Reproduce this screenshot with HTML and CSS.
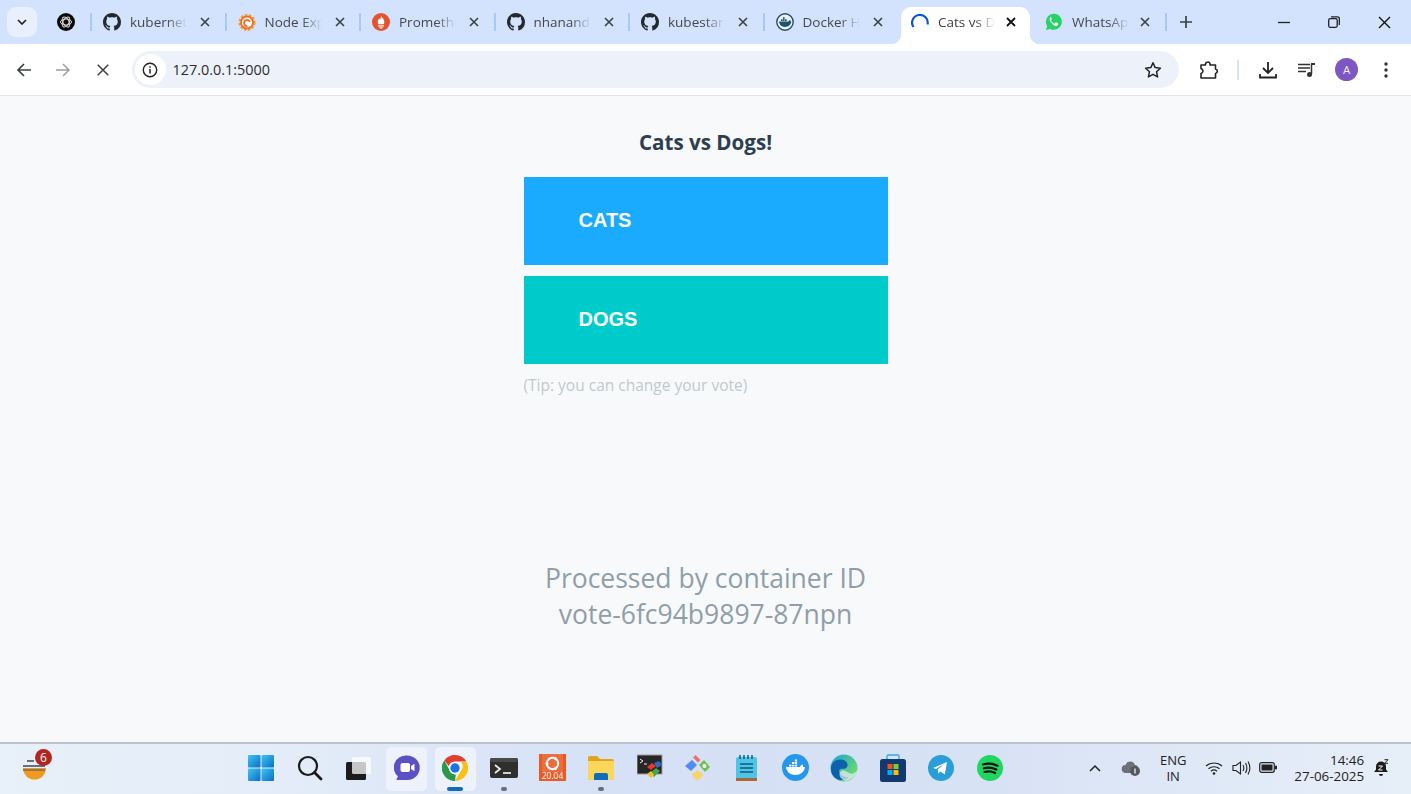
FILE: index.html
```html
<!DOCTYPE html>
<html lang="en">
<head>
<meta charset="utf-8">
<title>Cats vs Dogs!</title>
<link rel="stylesheet" href="styles.css">
</head>
<body>
<svg class="defs" width="0" height="0" aria-hidden="true">
  <symbol id="gh" viewBox="0 0 16 16"><path fill="#24292f" d="M8 0C3.58 0 0 3.58 0 8c0 3.54 2.29 6.53 5.47 7.59.4.07.55-.17.55-.38 0-.19-.01-.82-.01-1.49-2.01.37-2.53-.49-2.69-.94-.09-.23-.48-.94-.82-1.13-.28-.15-.68-.52-.01-.53.63-.01 1.08.58 1.23.82.72 1.21 1.87.87 2.33.66.07-.52.28-.87.51-1.07-1.78-.2-3.64-.89-3.64-3.95 0-.87.31-1.59.82-2.15-.08-.2-.36-1.02.08-2.12 0 0 .67-.21 2.2.82.64-.18 1.32-.27 2-.27.68 0 1.36.09 2 .27 1.53-1.04 2.2-.82 2.2-.82.44 1.1.16 1.92.08 2.12.51.56.82 1.27.82 2.15 0 3.07-1.87 3.75-3.65 3.95.29.25.54.73.54 1.48 0 1.07-.01 1.93-.01 2.2 0 .21.15.46.55.38A8.013 8.013 0 0016 8c0-4.42-3.58-8-8-8z"/></symbol>
  <symbol id="x" viewBox="0 0 10 10"><path d="M1 1l8 8M9 1l-8 8" stroke="#3c4043" stroke-width="1.6" fill="none"/></symbol>
</svg>

<header class="tabstrip">
  <div class="tab-search"><svg width="10" height="6" viewBox="0 0 10 6"><path d="M1 1l4 4 4-4" stroke="#1f1f1f" stroke-width="1.6" fill="none"/></svg></div>
  <div class="pinned"><svg width="18" height="18" viewBox="0 0 18 18"><circle cx="9" cy="9" r="9" fill="#0b0b0b"/><g fill="none" stroke="#ddd" stroke-width="1"><ellipse cx="9" cy="9" rx="5.5" ry="3"/><ellipse cx="9" cy="9" rx="5.5" ry="3" transform="rotate(60 9 9)"/><ellipse cx="9" cy="9" rx="5.5" ry="3" transform="rotate(120 9 9)"/></g></svg></div>
  <i class="sep"></i>
  <div class="tab"><svg class="fav" viewBox="0 0 16 16"><use href="#gh"/></svg><span class="title">kubernetes</span><svg class="close" viewBox="0 0 10 10"><use href="#x"/></svg></div>
  <i class="sep"></i>
  <div class="tab"><svg class="fav" viewBox="0 0 18 18"><circle cx="9" cy="9.500" r="7.300" fill="none" stroke="#f79a2b" stroke-width="2.400" stroke-dasharray="2.400 1.600"/><circle cx="9" cy="9.500" r="6" fill="#fff" stroke="#f0702a" stroke-width="1.800"/><path d="M11.800 8.800A3 3 0 1 0 9.500 13" fill="none" stroke="#f0702a" stroke-width="1.800"/></svg><span class="title">Node Exporter</span><svg class="close" viewBox="0 0 10 10"><use href="#x"/></svg></div>
  <i class="sep"></i>
  <div class="tab"><svg class="fav" viewBox="0 0 18 18"><circle cx="9" cy="9" r="9" fill="#e6522c"/><path fill="#fff" d="M9 2.500c.5 2 3.300 3.300 3.300 6.500 0 .9-.3 1.700-.8 2.300h-5c-.5-.6-.8-1.400-.8-2.300 0-1.700 1-2.400 1.300-3.700.6.500.8 1 .9 1.500C8.500 5.800 9.200 4 9 2.500zM6 12.200h6v1.300H6zM7 14.300h4c-.2.900-1 1.300-2 1.300s-1.800-.4-2-1.300z"/></svg><span class="title">Prometheus</span><svg class="close" viewBox="0 0 10 10"><use href="#x"/></svg></div>
  <i class="sep"></i>
  <div class="tab"><svg class="fav" viewBox="0 0 16 16"><use href="#gh"/></svg><span class="title">nhanand/</span><svg class="close" viewBox="0 0 10 10"><use href="#x"/></svg></div>
  <i class="sep"></i>
  <div class="tab"><svg class="fav" viewBox="0 0 16 16"><use href="#gh"/></svg><span class="title">kubestarter</span><svg class="close" viewBox="0 0 10 10"><use href="#x"/></svg></div>
  <i class="sep"></i>
  <div class="tab"><svg class="fav" viewBox="0 0 18 18"><circle cx="9" cy="9" r="8.200" fill="#e9f0f6" stroke="#22506f" stroke-width="1.400"/><path fill="#22506f" d="M3 8.600h9.500c.5-1 1.200-1.500 1.700-1.500.4.500.4 1 .2 1.500h1c-.6 3.600-3.300 5.400-6.400 5.400-3.300 0-5.600-2-6-5.400zM5 6.200h1.600v1.700H5zM7 6.200h1.600v1.700H7zM9 6.200h1.600v1.700H9zM7 4.200h1.600v1.700H7z"/></svg><span class="title">Docker Hub</span><svg class="close" viewBox="0 0 10 10"><use href="#x"/></svg></div>
  <i class="sep sep-hidden"></i>
  <div class="tab tab-active"><svg class="fav" viewBox="0 0 18 18"><path d="M2.400 14A7.800 7.800 0 1 1 16.500 11.500" fill="none" stroke="#0b57d0" stroke-width="2.200"/></svg><span class="title">Cats vs Dogs!</span><svg class="close" viewBox="0 0 10 10"><path d="M1 1l8 8M9 1l-8 8" stroke="#111" stroke-width="1.800" fill="none"/></svg></div>
  <i class="sep sep-hidden"></i>
  <div class="tab tab-last"><svg class="fav" viewBox="0 0 18 18"><path fill="#25d366" d="M9 .8A8 8 0 0 0 2.100 12.900L1 17l4.200-1.100A8 8 0 1 0 9 .8z"/><path fill="#fff" d="M6.500 4.700c-.3 0-.8.100-1.200.6-.4.500-1.200 1.200-1.200 2.800 0 1.700 1.200 3.200 1.400 3.500.2.200 2.400 3.700 5.800 4.500 0 0 2.200-.6 2.700-1.900.2-.6.200-1.200.2-1.300-.1-.2-.3-.2-.6-.4l-2-.9c-.3-.1-.5-.2-.7.100l-.9 1.100c-.2.200-.3.200-.6.100-1.500-.7-2.900-1.900-3.700-3.300-.2-.3 0-.4.100-.6l.7-1c.1-.2.100-.3 0-.5l-.9-2.200c-.2-.5-.4-.5-.7-.6z" transform="translate(1.200 -.5) scale(.85)"/></svg><span class="title">WhatsApp</span><svg class="close" viewBox="0 0 10 10"><use href="#x"/></svg></div>
  <i class="sep"></i>
  <div class="newtab"><svg width="14" height="14" viewBox="0 0 14 14"><path d="M7 1v12M1 7h12" stroke="#3c4043" stroke-width="1.700"/></svg></div>
  <div class="winctl">
    <div class="winbtn"><svg width="12" height="12" viewBox="0 0 12 12"><path d="M0 6.500h12" stroke="#222" stroke-width="1.300"/></svg></div>
    <div class="winbtn"><svg width="12" height="12" viewBox="0 0 12 12"><rect x=".7" y="2.700" width="8.500" height="8.600" rx="1.500" fill="none" stroke="#222" stroke-width="1.300"/><path d="M3 .8h6.500a1.800 1.800 0 0 1 1.800 1.800V9" fill="none" stroke="#222" stroke-width="1.300"/></svg></div>
    <div class="winbtn"><svg width="13" height="13" viewBox="0 0 13 13"><path d="M1 1l11 11M12 1L1 12" stroke="#111" stroke-width="1.400"/></svg></div>
  </div>
</header>

<nav class="toolbar">
  <div class="tool"><svg width="16" height="16" viewBox="0 0 16 16"><path d="M15 8H2M8 2L2 8l6 6" fill="none" stroke="#3c4043" stroke-width="1.700"/></svg></div>
  <div class="tool"><svg width="16" height="16" viewBox="0 0 16 16"><path d="M1 8h13M8 2l6 6-6 6" fill="none" stroke="#9aa0a6" stroke-width="1.500"/></svg></div>
  <div class="tool"><svg width="12" height="12" viewBox="0 0 12 12"><path d="M.7.7l10.600 10.600M11.300.7L.7 11.300" stroke="#3c4043" stroke-width="1.500"/></svg></div>
  <div class="omnibox">
    <div class="info"><svg width="16" height="16" viewBox="0 0 16 16"><circle cx="8" cy="8" r="6.700" fill="none" stroke="#222" stroke-width="1.400"/><path d="M8 7v4.500M8 4.300v1.500" stroke="#222" stroke-width="1.500"/></svg></div>
    <span class="url">127.0.0.1:5000</span>
    <svg class="star" width="18" height="18" viewBox="0 0 18 18"><path d="M9 1.800l2.200 4.800 5.200.6-3.900 3.500 1.100 5.200L9 13.300l-4.600 2.600 1.100-5.200L1.600 7.200l5.200-.6z" fill="none" stroke="#222" stroke-width="1.500" stroke-linejoin="round"/></svg>
  </div>
  <div class="tool tool-ext"><svg width="20" height="20" viewBox="0 0 20 20"><path d="M2 5h4.500a2.300 2.300 0 0 1 4.500-1.200V5h5.500v4a2.300 2.300 0 0 1 0 4.500V18H2v-4.500a3 3 0 0 0 2-2.500 3 3 0 0 0-2-2.500z" fill="none" stroke="#222" stroke-width="1.600" stroke-linejoin="round"/></svg></div>
  <i class="tool-sep"></i>
  <div class="tool"><svg width="18" height="18" viewBox="0 0 18 18"><path d="M9 1v10.500M4 7l5 5 5-5M1 13v3.500h16V13" fill="none" stroke="#222" stroke-width="1.800"/></svg></div>
  <div class="tool"><svg width="18" height="16" viewBox="0 0 18 16"><path d="M0 2.500h12M0 6h12M0 9.500h8M13.500 2v10" stroke="#333" stroke-width="1.500" fill="none"/><path d="M13 1h4v2h-4z" fill="#333"/><circle cx="11.500" cy="12.500" r="2.500" fill="#333"/></svg></div>
  <div class="tool"><div class="avatar">A</div></div>
  <div class="tool"><svg width="4" height="16" viewBox="0 0 4 16"><circle cx="2" cy="2" r="1.700" fill="#333"/><circle cx="2" cy="8" r="1.700" fill="#333"/><circle cx="2" cy="14" r="1.700" fill="#333"/></svg></div>
</nav>

<main class="page">
  <h3 class="heading">Cats vs Dogs!</h3>
  <form class="vote-form">
    <button class="vote vote-cats" type="button">CATS</button>
    <button class="vote vote-dogs" type="button">DOGS</button>
  </form>
  <p class="tip">(Tip: you can change your vote)</p>
  <p class="hostname">Processed by container ID vote-6fc94b9897-87npn</p>
</main>

<footer class="taskbar">
  <div class="weather">
    <svg width="28" height="24" viewBox="0 0 28 24"><path d="M2 11h23a11.500 11.500 0 0 1-23 0z" fill="#f29a1f"/><path d="M6 4h7M2 9h22" stroke="#6b6f78" stroke-width="2"/><path d="M2 13h22" stroke="#8a7a5a" stroke-width="2"/></svg>
    <span class="badge">6</span>
  </div>
  <div class="apps">
    <div class="app"><svg width="26" height="26" viewBox="0 0 26 26"><defs><linearGradient id="w" x1="0" y1="0" x2="1" y2="1"><stop offset="0" stop-color="#3dc5f5"/><stop offset="1" stop-color="#0a6fc2"/></linearGradient></defs><rect width="12.500" height="12.500" fill="url(#w)" rx="1"/><rect x="13.500" width="12.500" height="12.500" fill="url(#w)" rx="1"/><rect y="13.500" width="12.500" height="12.500" fill="url(#w)" rx="1"/><rect x="13.500" y="13.500" width="12.500" height="12.500" fill="url(#w)" rx="1"/></svg></div>
    <div class="app"><svg width="26" height="26" viewBox="0 0 26 26"><circle cx="11" cy="11" r="9" fill="none" stroke="#1a1a1a" stroke-width="2.200"/><path d="M17.500 17.500L24 24" stroke="#1a1a1a" stroke-width="2.800" stroke-linecap="round"/></svg></div>
    <div class="app"><svg width="26" height="26" viewBox="0 0 26 26"><rect x="1" y="7" width="20" height="18" rx="1.500" fill="#1c1c1c"/><rect x="7" y="2" width="19" height="17" rx="1.500" fill="#fff" fill-opacity=".75"/></svg></div>
    <div class="app app-pill"><svg width="26" height="26" viewBox="0 0 26 26"><path d="M13 .5a12.500 12 0 0 1 0 24.500H3.500c-.9 0-1.300-.8-.8-1.500l1.300-2A12.500 12 0 0 1 13 .5z" fill="#5b50c4"/><rect x="6.500" y="8" width="9.500" height="9" rx="2" fill="#fff"/><path d="M17 11l3.500-2.300v7.600L17 14z" fill="#fff"/></svg></div>
    <div class="app app-pill app-active"><svg width="26" height="26" viewBox="0 0 26 26"><path d="M13 0a13 13 0 0 1 11.300 6.500H13a6.500 6.500 0 0 0-6.200 4.500L2.300 5.500A13 13 0 0 1 13 0z" fill="#e33b2e"/><path d="M24.300 6.500A13 13 0 0 1 13 26l5.600-9.700a6.500 6.500 0 0 0 0-9.800z" fill="#fbc013"/><path d="M13 26A13 13 0 0 1 2.300 5.500l5.500 10a6.500 6.500 0 0 0 6 3.900L13 26z" fill="#2a9a46"/><circle cx="13" cy="13" r="6.200" fill="#fff"/><circle cx="13" cy="13" r="4.700" fill="#1a73e8"/></svg></div>
    <div class="app app-run"><svg width="28" height="22" viewBox="0 0 28 22"><rect width="28" height="20" y="1" rx="2" fill="#2f2f2f"/><rect width="28" height="4" y="1" rx="2" fill="#4a4a4a"/><path d="M5 8l5 4-5 4" fill="none" stroke="#eee" stroke-width="1.700"/><path d="M13 16h8" stroke="#eee" stroke-width="1.700"/></svg></div>
    <div class="app"><svg width="28" height="28" viewBox="0 0 28 28"><rect width="27" height="27" fill="#ea5a25"/><rect x="3" y="0" width="21" height="18" fill="#f4f1ee" fill-opacity=".12"/><circle cx="13.500" cy="9.500" r="5.700" fill="none" stroke="#fff" stroke-width="2"/><circle cx="8" cy="9.500" r="1.500" fill="#fff"/><circle cx="16.500" cy="4.700" r="1.500" fill="#fff"/><circle cx="16.500" cy="14.300" r="1.500" fill="#fff"/><text x="13.500" y="25" text-anchor="middle" class="ubuntu-ver">20.04</text></svg></div>
    <div class="app app-run"><svg width="28" height="26" viewBox="0 0 28 26"><path d="M1 3a2 2 0 0 1 2-2h7l3 3h12a2 2 0 0 1 2 2v17a2 2 0 0 1-2 2H3a2 2 0 0 1-2-2z" fill="#e0a518"/><path d="M1 6h26v17a2 2 0 0 1-2 2H3a2 2 0 0 1-2-2z" fill="#fad75a"/><path d="M7 20a2 2 0 0 1 2-2h10a2 2 0 0 1 2 2v5H7z" fill="#0f6cbd"/></svg></div>
    <div class="app"><svg width="26" height="28" viewBox="0 0 26 28"><rect y="1" width="25" height="19" fill="#262626" stroke="#9b9b9b"/><path d="M3 5l3 2-3 2M7 10h3" stroke="#eee" fill="none"/><path d="M10 13l5-4 4 3-5 4z" fill="#e23b2e"/><path d="M17 9l5-2 3 4-5 3z" fill="#3466c9"/><path d="M13 19l6-5 4 3-6 6z" fill="#4ba543"/><path d="M14 17l3 4-3 3-4-4z" fill="#f4c21f"/></svg></div>
    <div class="app"><svg width="28" height="28" viewBox="0 0 28 28"><path d="M11.500 1l5 5-2.500 2.500-5-5z" fill="#ea6f6f"/><path d="M20 6l6 7-5 5-6-7z" fill="#6cc24a"/><path d="M8 6l5 5-6 6-6-5z" fill="#4f8df5"/><path d="M13.500 16l6 5-6 6-6-6z" fill="#f6d565"/><circle cx="20.500" cy="12" r="2" fill="#fff"/></svg></div>
    <div class="app"><svg width="22" height="28" viewBox="0 0 22 28"><rect y="3" width="21" height="22" rx="2" fill="#4fc3e8"/><path d="M0 24h21v3H0z" fill="#a86a32"/><path d="M4 1v4M8 1v4M12 1v4M16 1v4" stroke="#0d5c7a" stroke-width="1.500"/><path d="M4 10h13M4 14h13M4 18h13" stroke="#0d5c7a" stroke-width="1.700"/></svg></div>
    <div class="app"><svg width="27" height="27" viewBox="0 0 27 27"><circle cx="13.500" cy="13.500" r="13.500" fill="#2496ed"/><path fill="#fff" d="M4 13h14c.4-1.400 1.500-2.300 2.500-2.600.6.800.7 1.700.5 2.600h2c-.8 5.300-4.700 8-9.500 8C8.400 21 4.500 18 4 13zM7 10.700h2.300V12.600H7zM9.900 10.700h2.300V12.600H9.900zM12.800 10.700h2.300V12.600h-2.300zM9.900 8.100h2.300V10H9.900zM12.800 8.100h2.300V10h-2.300zM12.800 5.500h2.300v1.900h-2.300z"/></svg></div>
    <div class="app"><svg width="28" height="28" viewBox="0 0 28 28"><defs><linearGradient id="e1" x1="0" y1="0" x2="1" y2=".7"><stop offset="0" stop-color="#1aa0d8"/><stop offset="1" stop-color="#6fdc6a"/></linearGradient></defs><circle cx="14" cy="14" r="13.500" fill="url(#e1)"/><path d="M1 15C1 8 6 5.500 10.500 5.500 16 5.500 19 10 17 13c-1 1.500-3 2-5 1.800-2.500-.2-3.500 1.500-2.500 4 1 2.800 6 5 9 4.200C15 28.500 1 27 1 15z" fill="#0c60ad"/><path d="M27.500 15.500C27 21 22 26 15.500 27c-3-1-6-3.500-6-7 .2-2.500 2.500-4 4-3.800 3 .5 6 4 9 3.500 2.500-.5 4.200-2.600 5-4.200z" fill="#e9eef8" fill-opacity=".7"/></svg></div>
    <div class="app"><svg width="26" height="28" viewBox="0 0 26 28"><path d="M7 6V2.500a1.500 1.500 0 0 1 1.500-1.500h9A1.500 1.500 0 0 1 19 2.500V6" fill="none" stroke="#55b7e8" stroke-width="1.800"/><rect y="5" width="26" height="23" rx="2.500" fill="#123a70"/><rect x="7.500" y="10" width="5" height="5" fill="#f1511b"/><rect x="13.500" y="10" width="5" height="5" fill="#80cc28"/><rect x="7.500" y="16" width="5" height="5" fill="#00adef"/><rect x="13.500" y="16" width="5" height="5" fill="#fbbc09"/></svg></div>
    <div class="app"><svg width="26" height="26" viewBox="0 0 26 26"><circle cx="13" cy="13" r="13" fill="#2a9ed8"/><path d="M5 13l14-6-2.200 12.500-4.300-3-2.200 2-.5-4 6.300-5.500-8 5z" fill="#fff"/></svg></div>
    <div class="app"><svg width="26" height="26" viewBox="0 0 26 26"><circle cx="13" cy="13" r="13" fill="#1ed760"/><path d="M6 9.500c5-1.500 10-1 14.500 1.200M6.800 13.300c4.500-1.200 8.700-.8 12.500 1.200M7.600 17c3.800-1 7.300-.6 10.500 1" fill="none" stroke="#111" stroke-width="2.200" stroke-linecap="round"/></svg></div>
  </div>
  <div class="tray">
    <svg class="tray-chev" width="12" height="8" viewBox="0 0 12 8"><path d="M1 7l5-5 5 5" fill="none" stroke="#222" stroke-width="1.500"/></svg>
    <svg class="tray-cloud" width="20" height="16" viewBox="0 0 20 16"><path d="M5 13a4 4 0 0 1-.5-8A5 5 0 0 1 14 5a3.500 3.500 0 0 1 3 4H11v4z" fill="#6d7176"/><circle cx="14" cy="11" r="5" fill="#55585c"/><path d="M14 8.500v5" stroke="#fff" stroke-width="1.200"/></svg>
    <div class="lang">ENG<br>IN</div>
    <svg class="tray-wifi" width="18" height="14" viewBox="0 0 18 14"><path d="M1 5c4.500-4 11.500-4 16 0M3.500 7.700c3-2.600 8-2.600 11 0M6 10.200c1.700-1.400 4.300-1.400 6 0" fill="none" stroke="#222" stroke-width="1.200"/><circle cx="9" cy="12.500" r="1.300" fill="#222"/></svg>
    <svg class="tray-vol" width="19" height="16" viewBox="0 0 19 16"><path d="M1 5.500h3L8.500 2v12L4 10.500H1z" fill="none" stroke="#222" stroke-width="1.100"/><path d="M11 5c1 1.800 1 4.200 0 6M13.500 3c1.700 3 1.700 7 0 10M16 1.500c2.300 4 2.300 9 0 13" fill="none" stroke="#222" stroke-width="1.100"/></svg>
    <svg class="tray-bat" width="18" height="11" viewBox="0 0 18 11"><rect x=".7" y=".7" width="14.600" height="9.600" rx="2" fill="none" stroke="#222" stroke-width="1.200"/><rect x="2.500" y="2.500" width="11" height="6" fill="#222"/><rect x="16" y="3.500" width="2" height="4" rx="1" fill="#222"/></svg>
    <div class="clock">14:46<br>27-06-2025</div>
    <svg class="tray-bell" width="15" height="18" viewBox="0 0 15 18"><path d="M7 2.500a5 5 0 0 1 5 5v3l2 2.500H0l2-2.500v-3a5 5 0 0 1 5-5z" fill="#1c1c1c"/><path d="M5 15h4a2 2 0 0 1-4 0z" fill="#1c1c1c"/><path d="M4.500 7h4l-4 4h4" fill="none" stroke="#fff" stroke-width="1"/><path d="M10.500 .7h3.500l-3.500 3.600H14" fill="none" stroke="#1c1c1c" stroke-width="1"/></svg>
  </div>
</footer>
</body>
</html>
```

FILE: styles.css
```css
* { box-sizing: border-box; }
html, body { height: 100%; }
body {
  margin: 0;
  height: 794px;
  overflow: hidden;
  display: flex;
  flex-direction: column;
  background: #f8f9fa;
  font-family: "Open Sans", "Noto Sans", sans-serif;
}
.defs { position: absolute; }

/* Tab strip */
.tabstrip {
  height: 44px;
  flex: none;
  display: flex;
  align-items: center;
  background: #d3e3fd;
  padding-left: 7px;
}
.tab-search {
  width: 30px;
  height: 30px;
  border-radius: 9px;
  background: #e9f0fd;
  display: flex;
  align-items: center;
  justify-content: center;
  margin-right: 7px;
  flex: none;
}
.pinned {
  width: 46px;
  display: flex;
  justify-content: center;
  padding-right: 2px;
  flex: none;
}
.sep {
  width: 2px;
  height: 18px;
  background: #a8c7fa;
  flex: none;
}
.sep-hidden { background: transparent; }
.tab {
  width: 132.5px;
  height: 36px;
  flex: none;
  display: flex;
  align-items: center;
  padding-left: 11px;
  position: relative;
}
.fav { width: 18px; height: 18px; flex: none; }
.title {
  margin-left: 9px;
  width: 57px;
  overflow: hidden;
  white-space: nowrap;
  font-size: 13.5px;
  color: #45474c;
  -webkit-mask-image: linear-gradient(to right, #000 65%, transparent 100%);
  mask-image: linear-gradient(to right, #000 65%, transparent 100%);
}
.close { width: 10px; height: 10px; margin-left: 13px; flex: none; }
.tab-active {
  width: 129px;
  height: 37px;
  margin: 7px 0 0 2px;
  padding: 0 0 7px 10px;
  background: #fff;
  border-radius: 10px 10px 0 0;
}
.tab-active::before,
.tab-active::after {
  content: "";
  position: absolute;
  bottom: 0;
  width: 10px;
  height: 10px;
}
.tab-active::before {
  left: -10px;
  background: radial-gradient(circle at 0 0, transparent 10px, #fff 10.500px);
}
.tab-active::after {
  right: -10px;
  background: radial-gradient(circle at 100% 0, transparent 10px, #fff 10.500px);
}
.tab-active .title { color: #3c4043; }
.tab-active .close { margin-left: 11px; }
.tab-last { padding-left: 13px; }
.tab-last .close { margin-left: 11px; }
.newtab {
  width: 38px;
  display: flex;
  justify-content: center;
  flex: none;
}
.winctl {
  margin-left: auto;
  display: flex;
  padding-right: 1px;
}
.winbtn {
  width: 50.5px;
  height: 32px;
  display: flex;
  align-items: center;
  justify-content: center;
}

/* Toolbar */
.toolbar {
  height: 52px;
  flex: none;
  display: flex;
  align-items: center;
  background: #fff;
  border-bottom: 1px solid #e3e5e8;
  padding-left: 4px;
}
.tool {
  width: 39.500px;
  height: 36px;
  flex: none;
  display: flex;
  align-items: center;
  justify-content: center;
}
.omnibox {
  width: 1047px;
  height: 37px;
  margin-left: 9px;
  flex: none;
  display: flex;
  align-items: center;
  padding: 0 17px 0 3px;
  background: #edf2fa;
  border-radius: 19px;
}
.info {
  width: 31px;
  height: 31px;
  border-radius: 50%;
  background: #fff;
  display: flex;
  align-items: center;
  justify-content: center;
  flex: none;
}
.url {
  margin-left: 7px;
  font-size: 14.400px;
  color: #2b2d30;
}
.star { margin-left: auto; }
.tool-ext { margin-left: 11px; }
.tool-sep {
  width: 2px;
  height: 20px;
  background: #d3e3fd;
  margin: 0 9px 0 8px;
  flex: none;
}
.avatar {
  width: 23px;
  height: 23px;
  border-radius: 50%;
  background: #7e57c2;
  color: #f2eefb;
  font-size: 11.500px;
  display: flex;
  align-items: center;
  justify-content: center;
}

/* Page */
.page {
  flex: 1;
  display: flex;
  flex-direction: column;
  align-items: center;
  padding-top: 31px;
}
.heading {
  margin: 0 0 19px;
  font-size: 20.600px;
  line-height: 31px;
  font-weight: 700;
  color: #2c3e50;
}
.vote-form {
  width: 364px;
  display: flex;
  flex-direction: column;
  gap: 11px;
}
.vote {
  height: 88px;
  border: 0;
  padding: 0 0 2px 55px;
  text-align: left;
  color: #fff;
  font-family: "Liberation Sans", Arial, sans-serif;
  font-size: 20px;
  font-weight: 700;
}
.vote-cats { background: #1aaafe; }
.vote-dogs { background: #00cbcb; }
.tip {
  width: 364px;
  margin: 10px 0 0;
  font-size: 15.500px;
  line-height: 22px;
  color: #c0c9ce;
}
.hostname {
  width: 364px;
  margin: 164px 0 0;
  text-align: center;
  font-size: 26.500px;
  line-height: 36px;
  color: #8f9ea8;
}

/* Taskbar */
.taskbar {
  height: 52px;
  flex: none;
  display: flex;
  align-items: center;
  border-top: 2px solid #bcc2cc;
  background: linear-gradient(to right, #e8f1f9 0%, #e3ecf8 20%, #d6e0f6 45%, #d8e2f5 70%, #e6eff8 100%);
}
.weather {
  width: 236.700px;
  height: 100%;
  flex: none;
  padding: 13px 0 0 21px;
  position: relative;
}
.badge {
  position: absolute;
  left: 35px;
  top: 5px;
  width: 17px;
  height: 17px;
  border-radius: 50%;
  background: #b3261e;
  color: #fff;
  font-size: 12px;
  line-height: 17px;
  text-align: center;
}
.apps {
  display: flex;
  height: 100%;
  flex: none;
}
.app {
  width: 48.600px;
  height: 100%;
  flex: none;
  display: flex;
  align-items: center;
  justify-content: center;
  padding-bottom: 3px;
  position: relative;
}
.app-pill::before {
  content: "";
  position: absolute;
  z-index: 0;
  left: 4px;
  right: 4px;
  top: 3px;
  bottom: 3px;
  border-radius: 5px;
  background: #eef2fc;
}
.app svg { position: relative; z-index: 1; }
.app-active::after,
.app-run::after {
  content: "";
  position: absolute;
  bottom: 3px;
  left: 50%;
  height: 4px;
  border-radius: 2px;
}
.app-active::after {
  width: 16px;
  margin-left: -8px;
  background: #0f6cbd;
}
.app-run::after {
  width: 6px;
  margin-left: -3px;
  background: #6b6f78;
}
.ubuntu-ver {
  font-family: "Open Sans", sans-serif;
  font-size: 8.500px;
  fill: #fff;
}
.tray {
  flex: 1;
  display: flex;
  align-items: center;
  padding: 0 0 3px 75px;
}
.tray-cloud { margin-left: 20px; }
.lang {
  width: 40px;
  margin-left: 12px;
  text-align: center;
  font-size: 13px;
  line-height: 16px;
  color: #222;
}
.tray-wifi { margin-left: 12px; }
.tray-vol { margin-left: 9px; }
.tray-bat { margin-left: 8px; }
.clock {
  width: 80px;
  margin-left: 7px;
  text-align: right;
  font-size: 13.400px;
  line-height: 16px;
  color: #222;
}
.tray-bell { margin-left: 10px; }
```
